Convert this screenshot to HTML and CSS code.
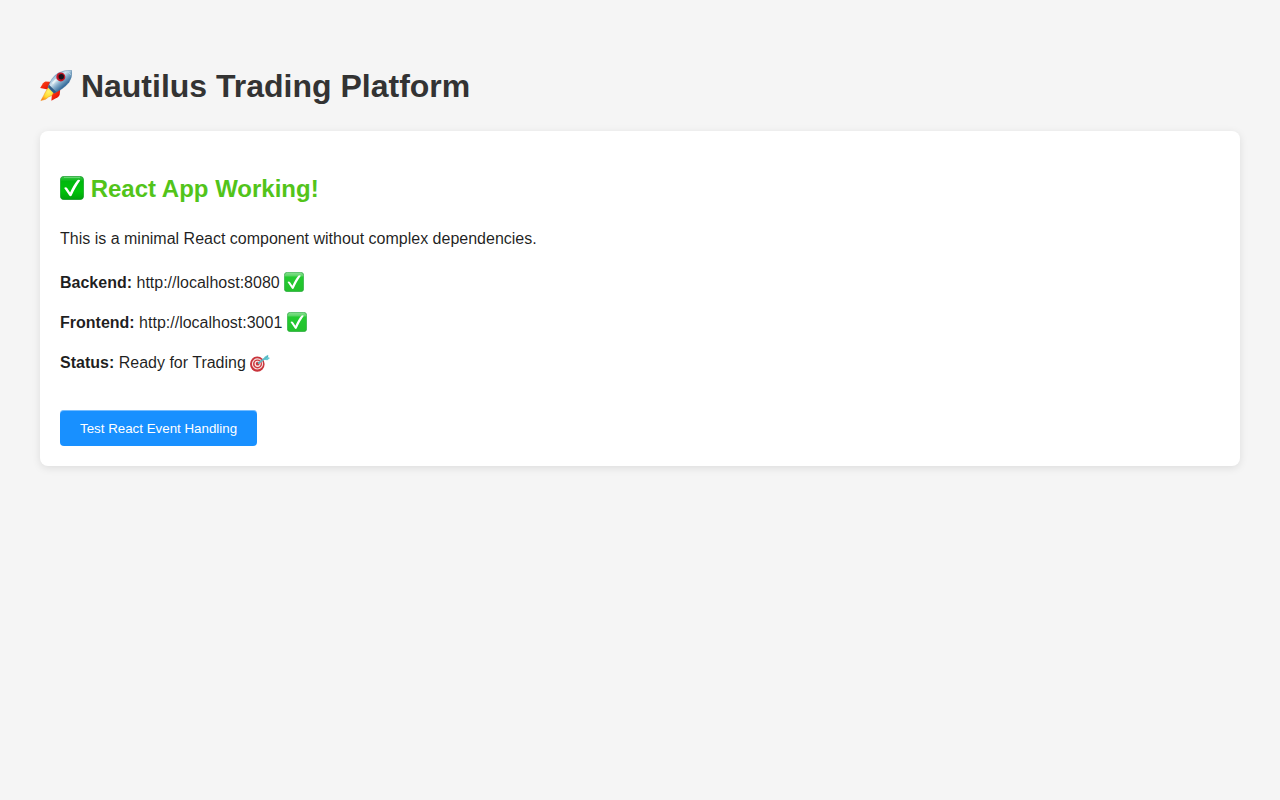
FILE: index.html
```html
<!DOCTYPE html>
<html lang="en">
<head>
<meta charset="utf-8">
<title>Nautilus Trading Platform</title>
<link rel="stylesheet" href="styles.css">
</head>
<body>
<svg class="defs" width="0" height="0" aria-hidden="true">
  <defs>
    <linearGradient id="green" x1="0" y1="0" x2="0" y2="1"><stop offset="0" stop-color="#3fc64c"/><stop offset=".22" stop-color="#00b80e"/><stop offset=".65" stop-color="#00c20a"/><stop offset="1" stop-color="#00a00c"/></linearGradient>
    <linearGradient id="light-green" x1="0" y1="0" x2="0" y2="1"><stop offset="0" stop-color="#8ae092"/><stop offset=".18" stop-color="#5cd567"/><stop offset=".24" stop-color="#23cb30"/><stop offset="1" stop-color="#23c02c"/></linearGradient>
    <linearGradient id="hull" x1=".2" y1=".2" x2=".75" y2=".8"><stop offset="0" stop-color="#78a9cf"/><stop offset=".35" stop-color="#d3e4ee"/><stop offset=".55" stop-color="#86aecb"/><stop offset=".85" stop-color="#316898"/></linearGradient>
    <linearGradient id="fin" x1="0" y1="0" x2="1" y2="1"><stop offset="0" stop-color="#ff4a18"/><stop offset="1" stop-color="#e00000"/></linearGradient>
    <radialGradient id="flame" cx=".6" cy=".35" r=".7"><stop offset="0" stop-color="#fff36a"/><stop offset=".6" stop-color="#ffd92e"/><stop offset="1" stop-color="#ff8a12"/></radialGradient>
    <symbol id="check" viewBox="0 0 24 24">
      <rect x=".3" y=".3" width="23.400" height="23.400" rx="4" fill="url(#green)" stroke="#118f25" stroke-width=".6"/>
      <path d="M4 1.500h16" stroke="#8ee49a" stroke-width=".9" opacity=".6"/>
      <path d="M4.200 12c.8-1 2.200-1 2.900 0l3 4.600C12 11.800 14.700 7.400 17.200 4.400c.7-.8 2.300-.8 3 0C16.900 9 14 14.100 11.700 19.500c-.6 1-1.800 1-2.400 0z" fill="#fff"/>
    </symbol>
    <symbol id="check-soft" viewBox="0 0 24 24">
      <rect x=".4" y=".4" width="23.200" height="23.200" rx="3.600" fill="url(#light-green)" stroke="#30a747" stroke-width=".8"/>
      <path d="M4.200 12c.8-1 2.200-1 2.900 0l3 4.600C12 11.800 14.700 7.400 17.200 4.400c.7-.8 2.300-.8 3 0C16.900 9 14 14.100 11.700 19.500c-.6 1-1.800 1-2.400 0z" fill="#fff"/>
    </symbol>
  </defs>
</svg>
<main class="page">
  <h1 class="title"><svg class="emoji emoji-rocket" viewBox="0 0 32 32" role="img" aria-label="rocket">
    <path d="M13 12 5.500 11.500Q4 12 3 13.300L.2 18.100l8.800 1.700z" fill="url(#fin)"/>
    <path d="M20.500 17.500 19.700 24.500Q19.500 26 17.700 27.300L11.400 30.800l.6-8z" fill="url(#fin)"/>
    <path d="M8.700 16.800 13.800 22.300 11.900 25.500Q8.200 26.700 5.700 29.200L.9 30.600 3.500 25.900Q5.300 21.900 8.700 16.800z" fill="url(#flame)" stroke="#f18a20" stroke-width=".5"/>
    <path d="M31.700.3Q32.700 6.600 29 12.300C25.500 17 20 20.300 14 23.300L8 17.200C10 11 13.300 6 18.300 3Q24.800-.2 31.700.3z" fill="url(#hull)" stroke="#44749c" stroke-width=".4"/>
    <path d="m9 14.800 7.300 7.300L14 23.300 8 17.200z" fill="#315c85"/>
    <path d="M12.500 13.500 16 9.500" stroke="#e9f4f7" stroke-width="1.800"/>
    <circle cx="20.800" cy="6.900" r="4.500" fill="#c51625"/>
    <circle cx="21.300" cy="6.700" r="2.700" fill="#17141c"/>
    <path d="M26.200 1.500Q29.500 2.300 30.700 4.700" fill="none" stroke="#b5d6e8" stroke-width="1"/>
  </svg> Nautilus Trading Platform</h1>
  <section class="card">
    <h2 class="heading"><svg class="emoji emoji-heading" role="img" aria-label="check"><use href="#check"/></svg> React App Working!</h2>
    <p class="intro">This is a minimal React component without complex dependencies.</p>
    <div class="details">
      <p><strong>Backend:</strong> http://localhost:8080 <svg class="emoji emoji-text" role="img" aria-label="check"><use href="#check-soft"/></svg></p>
      <p><strong>Frontend:</strong> http://localhost:3001 <svg class="emoji emoji-text" role="img" aria-label="check"><use href="#check-soft"/></svg></p>
      <p><strong>Status:</strong> Ready for Trading <svg class="emoji emoji-text" viewBox="0 0 20 20" role="img" aria-label="target">
        <ellipse cx="7.300" cy="12.100" rx="7.300" ry="7.600" fill="#c9353c"/>
        <circle cx="7.500" cy="11.900" r="5.600" fill="#f6e4e2"/>
        <circle cx="7.500" cy="11.900" r="4.500" fill="#cf3b42"/>
        <circle cx="7.600" cy="11.800" r="3.100" fill="#faeae8"/>
        <circle cx="7.700" cy="11.700" r="1.900" fill="#c9353c"/>
        <path d="M8 11.500 16 5.500" stroke="#62b4bf" stroke-width="1.600"/>
        <path d="M13.300 7.800 14.700 4.800 18 2.800 18.200 5.200 20 6 17.300 8.200z" fill="#65c9d3"/>
        <path d="m14.500 6.800 3.800-3" stroke="#438c9a" stroke-width=".5"/>
      </svg></p>
    </div>
    <button class="action" type="button">Test React Event Handling</button>
  </section>
</main>
</body>
</html>
```
FILE: styles.css
```css
body {
  margin: 0;
  background: #f5f5f5;
  color: rgba(0, 0, 0, 0.88);
  font: 16px/24px "Liberation Sans", Arial, sans-serif;
}
.defs { position: absolute; }
.page {
  display: flow-root;
  box-sizing: border-box;
  min-height: 100vh;
  padding: 40px;
}
.title {
  margin: 22.44px 0 20.44px;
  color: #333;
  font-size: 32px;
  line-height: 48px;
}
.card {
  display: flow-root;
  padding: 20px;
  border-radius: 8px;
  background: #fff;
  box-shadow: 0 2px 8px rgba(0, 0, 0, 0.1);
}
.heading {
  margin: 19.92px 0;
  color: #52c41a;
  font-size: 24px;
  line-height: 36px;
}
.intro { margin: 16px 0; }
.details { margin: 20px 0; }
.details p { margin: 16px 0; }
.emoji { display: inline-block; }
.emoji-rocket { width: 32px; height: 32px; vertical-align: -5px; }
.emoji-heading { width: 24px; height: 24px; vertical-align: -3px; }
.emoji-text { width: 20px; height: 20px; vertical-align: -4px; }
.action {
  display: block;
  height: 36px;
  margin-top: 35.6px;
  padding: 11px 20px 10px;
  border: 0;
  border-radius: 4px;
  background: #1890ff;
  box-shadow: inset 0 1px rgba(255, 255, 255, 0.4);
  color: #fff;
  font: 13.3333px "Liberation Sans", Arial, sans-serif;
}
```
